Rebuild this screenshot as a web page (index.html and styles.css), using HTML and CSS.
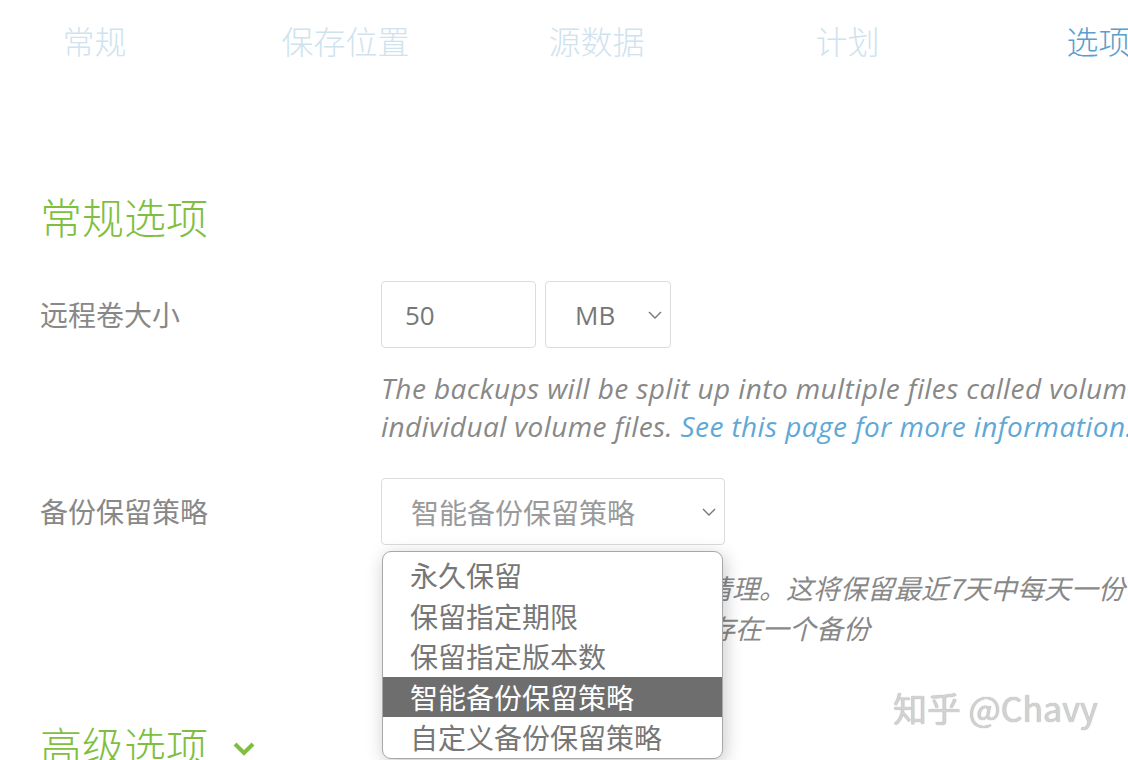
FILE: index.html
```html
<!DOCTYPE html>
<html lang="zh-CN">
<head>
<meta charset="utf-8">
<title>选项</title>
<link rel="stylesheet" href="styles.css">
</head>
<body>
<div class="page">
  <nav class="tabs">
    <div class="tab">常规</div>
    <div class="tab">保存位置</div>
    <div class="tab">源数据</div>
    <div class="tab">计划</div>
    <div class="tab active">选项</div>
  </nav>

  <h2 class="section-title">常规选项</h2>

  <div class="form-row">
    <label class="form-label">远程卷大小</label>
    <div class="form-field">
      <div class="control-group">
        <input class="text-input size-input" type="text" value="50">
        <div class="select unit-select">
          <span class="select-value">MB</span>
          <svg class="chevron" viewBox="0 0 14 8" width="14" height="8"><path d="M1 1l6 6 6-6" fill="none" stroke="#777" stroke-width="1.4"/></svg>
        </div>
      </div>
      <p class="help">The backups will be split up into multiple files called volumes. Set the size to use for individual volume files. <a href="#">See this page for more information.</a></p>
    </div>
  </div>

  <div class="form-row">
    <label class="form-label">备份保留策略</label>
    <div class="form-field">
      <div class="select-wrap">
        <div class="select retention-select">
          <span class="select-value">智能备份保留策略</span>
          <svg class="chevron" viewBox="0 0 14 8" width="14" height="8"><path d="M1 1l6 6 6-6" fill="none" stroke="#777" stroke-width="1.4"/></svg>
        </div>
        <ul class="dropdown">
          <li>永久保留</li>
          <li>保留指定期限</li>
          <li>保留指定版本数</li>
          <li class="selected">智能备份保留策略</li>
          <li>自定义备份保留策略</li>
        </ul>
      </div>
      <p class="help help-cn">备份将随着时间推移被智能清理。这将保留最近7天中每天一份备份，最近4周中每周一份备份，12个月内每月一份，并始终存在一个备份</p>
    </div>
  </div>

  <h2 class="section-title advanced">高级选项
    <svg class="toggle" viewBox="0 0 22 14" width="22" height="14"><path d="M2 2l9 9 9-9" fill="none" stroke="#7fbf3f" stroke-width="4"/></svg>
  </h2>

  <div class="watermark">知乎 @Chavy</div>
</div>
</body>
</html>
```

FILE: styles.css
```css
html, body {
  margin: 0;
  padding: 0;
  background: #fff;
  overflow: hidden;
}

body {
  font-family: "Open Sans", "Noto Sans CJK SC", sans-serif;
  color: #888;
}

.page {
  position: relative;
  width: 1128px;
  height: 760px;
  overflow: hidden;
}

/* step tabs */
.tabs {
  display: grid;
  grid-template-columns: repeat(5, 251px);
  margin-left: -31px;
  padding-top: 17px;
}

.tab {
  text-align: center;
  font-family: "Noto Sans CJK SC", sans-serif;
  font-weight: 300;
  font-size: 32px;
  line-height: 46px;
  color: #cfe3ef;
  white-space: nowrap;
}

.tab.active {
  color: #5b9dcb;
}

/* section headings */
.section-title {
  margin: 123px 0 0 40px;
  font-family: "Noto Sans CJK SC", sans-serif;
  font-weight: 300;
  font-size: 42px;
  line-height: 60px;
  color: #7fbf3f;
}

.section-title.advanced {
  margin-top: 67px;
  display: flex;
  align-items: center;
  gap: 25px;
}

.toggle {
  margin-top: 8px;
}

/* form rows */
.form-row {
  display: grid;
  grid-template-columns: 341px 1150px;
  padding-left: 40px;
  margin-top: 35px;
}

.form-row + .form-row {
  margin-top: 33px;
}

.form-label {
  font-family: "Noto Sans CJK SC", sans-serif;
  font-size: 28px;
  line-height: 67px;
  color: #888;
}

.control-group {
  display: flex;
  gap: 9px;
}

.text-input,
.select {
  box-sizing: border-box;
  height: 67px;
  border: 1px solid #dcdcdc;
  border-radius: 4px;
  background: #fff;
}

.text-input {
  width: 155px;
  padding: 0 23px;
  font-family: "Open Sans", sans-serif;
  font-size: 26px;
  color: #777;
  outline: none;
}

.select {
  display: flex;
  align-items: center;
  justify-content: space-between;
}

.unit-select {
  width: 126px;
  padding: 0 8px 0 29px;
}

.unit-select .select-value {
  font-family: "Open Sans", sans-serif;
  font-size: 26px;
  color: #777;
}

.chevron {
  flex: none;
}

.select-wrap {
  position: relative;
  width: 344px;
}

.retention-select {
  width: 344px;
  padding: 0 8px 0 29px;
}

.retention-select .select-value {
  font-family: "Noto Sans CJK SC", sans-serif;
  font-size: 28px;
  color: #9a9a9a;
}

/* help text */
.help {
  margin: 21px 0 0;
  font-style: italic;
  font-size: 28px;
  letter-spacing: 0.4px;
  line-height: 38px;
  color: #888;
}

.help-cn {
  font-family: "Noto Sans CJK SC", sans-serif;
  font-size: 27px;
  letter-spacing: 0;
  line-height: 40px;
  margin-top: 23px;
}

.help a {
  color: #5fa8d6;
  text-decoration: none;
}

/* open option list */
.dropdown {
  position: absolute;
  top: 73px;
  left: 1px;
  width: 341px;
  margin: 0;
  padding: 3px 0 0;
  list-style: none;
  box-sizing: border-box;
  background: #fff;
  border: 1px solid #a8a8a8;
  border-radius: 9px;
  box-shadow: 2px 4px 18px rgba(0, 0, 0, 0.22);
  z-index: 2;
  overflow: hidden;
}

.dropdown li {
  height: 40.6px;
  line-height: 40px;
  padding-left: 27px;
  font-family: "Noto Sans CJK SC", sans-serif;
  font-size: 28px;
  color: #777;
  white-space: nowrap;
}

.dropdown li.selected {
  background: #6e6e6e;
  color: #fff;
}

/* watermark */
.watermark {
  position: absolute;
  left: 893px;
  top: 686px;
  font-family: "Noto Sans CJK SC", sans-serif;
  font-size: 34px;
  line-height: 44px;
  color: #d2d2d2;
  text-shadow: 0 0 1px #999;
  z-index: 3;
}
```
